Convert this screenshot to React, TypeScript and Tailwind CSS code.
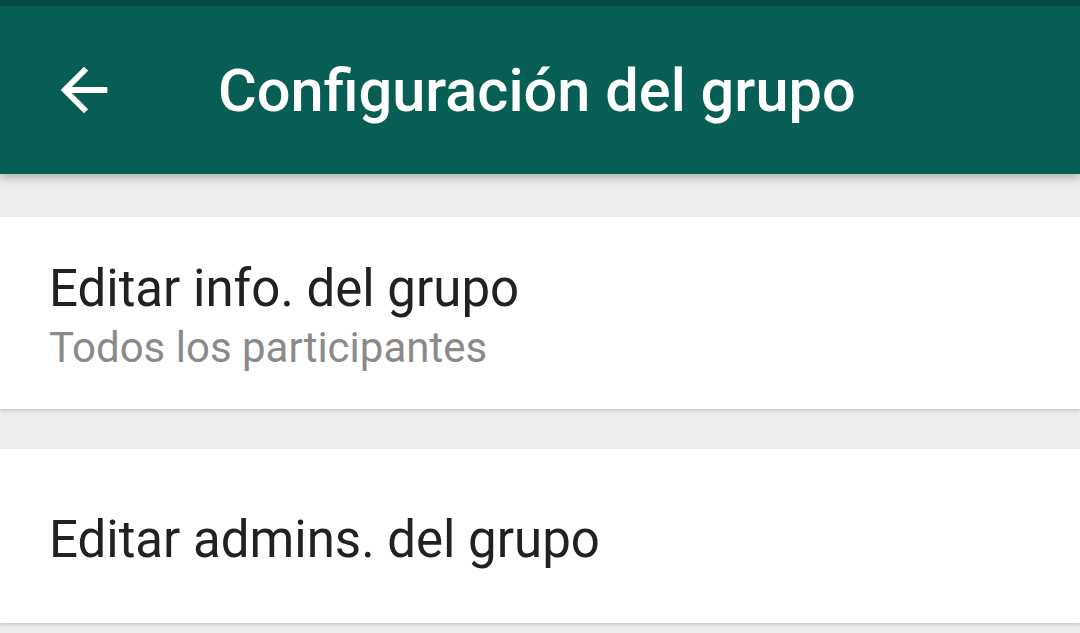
export default function App() {
  return (
    <div className="w-[1080px] h-[633px] overflow-hidden bg-[#ededed] flex flex-col font-['Roboto',sans-serif]">
      {/* status bar strip */}
      <div className="h-[6px] shrink-0 bg-[#054c44]" />

      {/* toolbar */}
      <div className="relative z-10 h-[168px] shrink-0 bg-[#075e54] flex items-center shadow-[0_4px_8px_rgba(0,0,0,0.25)]">
        <div className="w-[218px] shrink-0 flex items-center pl-[49px]">
          <svg width="70" height="70" viewBox="0 0 24 24" fill="none">
            <path d="M20 11H7.83l5.59-5.59L12 4l-8 8 8 8 1.41-1.41L7.83 13H20v-2z" fill="#fff" />
          </svg>
        </div>
        <div className="text-white text-[59.5px] font-medium leading-none pt-[4px]">Configuración del grupo</div>
      </div>

      <div className="h-[43px] shrink-0" />

      {/* item 1 */}
      <div className="h-[192px] shrink-0 bg-white flex flex-col justify-center pl-[49px] pt-[5px] shadow-[0_2px_3px_rgba(0,0,0,0.15)]">
        <div className="text-[#212121] text-[51px] leading-none pb-[13px]">Editar info. del grupo</div>
        <div className="text-[#8a8a8a] text-[42px] leading-none">Todos los participantes</div>
      </div>

      <div className="h-[40px] shrink-0" />

      {/* item 2 */}
      <div className="h-[174px] shrink-0 bg-white flex items-center pl-[49px] pt-[6px] shadow-[0_2px_3px_rgba(0,0,0,0.15)]">
        <div className="text-[#212121] text-[51px] leading-none">Editar admins. del grupo</div>
      </div>
    </div>
  );
}
